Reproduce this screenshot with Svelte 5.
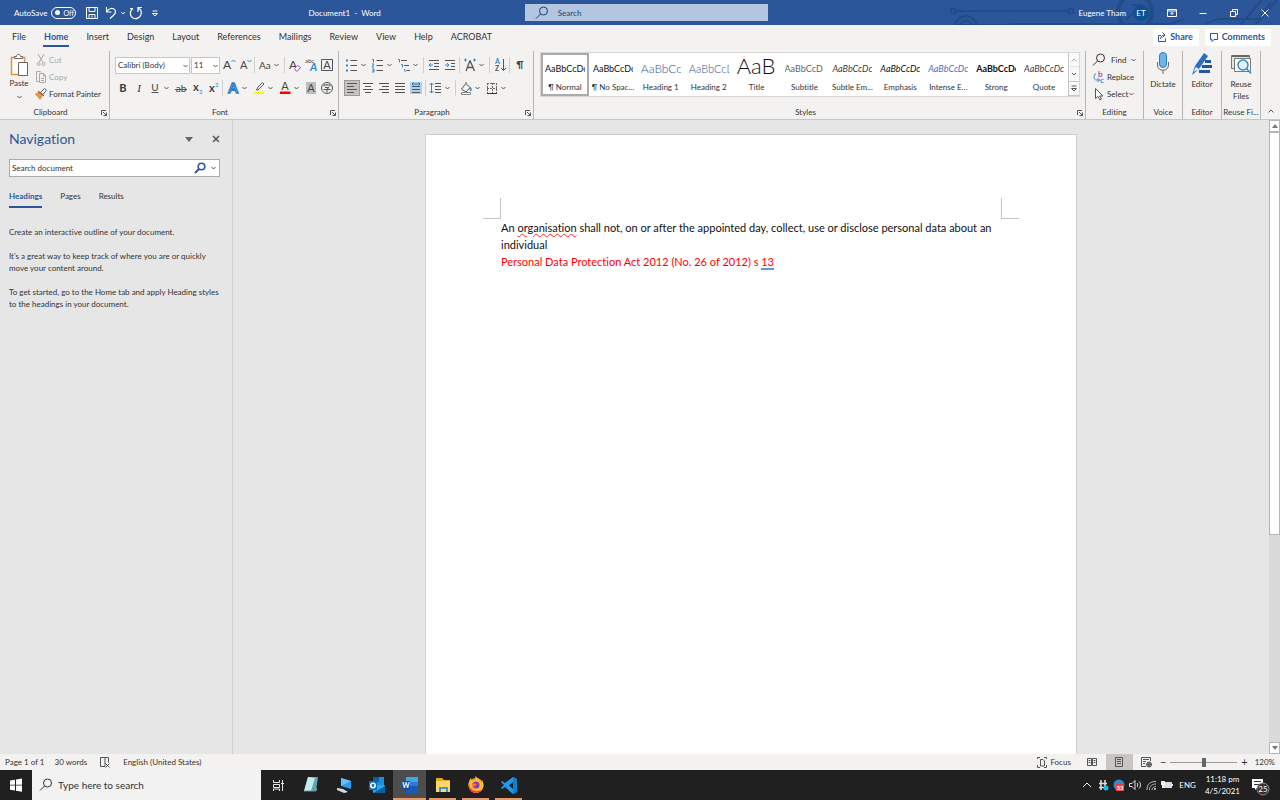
<script lang="ts">
  type Tool = { icon?: string; label: string; menu?: boolean; sep?: boolean; active?: boolean };

  const tabs = ['File', 'Home', 'Insert', 'Design', 'Layout', 'References', 'Mailings', 'Review', 'View', 'Help', 'ACROBAT'];
  let activeTab = $state('Home');

  const navTabs = ['Headings', 'Pages', 'Results'];
  let activeNav = $state('Headings');

  const sep: Tool = { label: '', sep: true };

  const fontTop: Tool[] = [
    { icon: 'grow', label: 'Increase Font Size' },
    { icon: 'shrink', label: 'Decrease Font Size' },
    sep,
    { icon: 'changeCase', label: 'Change Case', menu: true },
    sep,
    { icon: 'clearFormat', label: 'Clear All Formatting' },
    { icon: 'phonetic', label: 'Phonetic Guide' },
    { icon: 'charBorder', label: 'Character Border' }
  ];

  const fontBottom: Tool[] = [
    { icon: 'bold', label: 'Bold' },
    { icon: 'italic', label: 'Italic' },
    { icon: 'underline', label: 'Underline', menu: true },
    { icon: 'strike', label: 'Strikethrough' },
    { icon: 'subscript', label: 'Subscript' },
    { icon: 'superscript', label: 'Superscript' },
    sep,
    { icon: 'effects', label: 'Text Effects', menu: true },
    { icon: 'highlight', label: 'Text Highlight Color', menu: true },
    { icon: 'fontColor', label: 'Font Color', menu: true },
    { icon: 'charShade', label: 'Character Shading' },
    { icon: 'enclose', label: 'Enclose Characters' }
  ];

  const paraTop: Tool[] = [
    { icon: 'bullets', label: 'Bullets', menu: true },
    { icon: 'numbering', label: 'Numbering', menu: true },
    { icon: 'multilevel', label: 'Multilevel List', menu: true },
    sep,
    { icon: 'outdent', label: 'Decrease Indent' },
    { icon: 'indent', label: 'Increase Indent' },
    sep,
    { icon: 'asian', label: 'Asian Layout', menu: true },
    sep,
    { icon: 'sort', label: 'Sort' },
    sep,
    { icon: 'pilcrow', label: 'Show Paragraph Marks' }
  ];

  const paraBottom: Tool[] = [
    { icon: 'alignLeft', label: 'Align Left', active: true },
    { icon: 'alignCenter', label: 'Center' },
    { icon: 'alignRight', label: 'Align Right' },
    { icon: 'justify', label: 'Justify' },
    { icon: 'distribute', label: 'Distributed' },
    sep,
    { icon: 'spacing', label: 'Line Spacing', menu: true },
    sep,
    { icon: 'shading', label: 'Shading', menu: true },
    { icon: 'borders', label: 'Borders', menu: true }
  ];

  const styles = [
    { name: '¶ Normal', sample: 'AaBbCcDc', kind: 'normal' },
    { name: '¶ No Spac...', sample: 'AaBbCcDc', kind: 'normal' },
    { name: 'Heading 1', sample: 'AaBbCc', kind: 'heading1' },
    { name: 'Heading 2', sample: 'AaBbCcD', kind: 'heading2' },
    { name: 'Title', sample: 'AaB', kind: 'title' },
    { name: 'Subtitle', sample: 'AaBbCcD', kind: 'subtitle' },
    { name: 'Subtle Em...', sample: 'AaBbCcDc', kind: 'subtle' },
    { name: 'Emphasis', sample: 'AaBbCcDc', kind: 'emphasis' },
    { name: 'Intense E...', sample: 'AaBbCcDc', kind: 'intense' },
    { name: 'Strong', sample: 'AaBbCcDc', kind: 'strong' },
    { name: 'Quote', sample: 'AaBbCcDc', kind: 'quote' }
  ];
  let activeStyle = $state(0);
  let zoom = $state(120);

  const apps = [
    { icon: 'taskView', label: 'Task View' },
    { icon: 'notepad', label: 'Notepad' },
    { icon: 'remote', label: 'Remote Desktop' },
    { icon: 'outlook', label: 'Outlook' },
    { icon: 'word', label: 'Word', open: true, focused: true },
    { icon: 'explorer', label: 'File Explorer', open: true },
    { icon: 'firefox', label: 'Firefox', open: true },
    { icon: 'vscode', label: 'Visual Studio Code', open: true }
  ];

  const tray = ['slack', 'alert', 'volume', 'wifi', 'battery'];

  const g = 'stroke="#555" fill="none"';
  const b = 'stroke="#2e8bd0" fill="none"';

  // all drawn on a 16 x 16 grid
  const icons: Record<string, string> = {
    chevron: `<path d="M6 7l2 2 2-2" ${g}/>`,
    launcher: `<path d="M5.500 10V5.500H10M7 7l3.500 3.500M10.500 7.500v3h-3" ${g}/>`,
    save: `<path d="M2.500 2.500h11v11h-11zM5 2.500v4h6v-4M5 13.500v-4h6v4M8 10.500v2" stroke="#fff" fill="none"/>`,
    undo: `<path d="M3.500 2v5h5M4 6.500C6 3 10 2.500 12 5c1.500 2.500 0 4.500-5 8.500" stroke="#fff" stroke-width="1.200" fill="none"/>`,
    redo: `<path d="M5 3.500C1.500 5.500 1.500 11 5 13c3 1.500 7 0 8-3.500.8-3-.5-5.500-3-6.500M10 7V2.500h4M5 3.500H2" stroke="#fff" stroke-width="1.200" fill="none"/>`,
    customize: `<path d="M5.500 6h5" stroke="#fff"/><path d="M5.500 8.500l2.500 2.500 2.500-2.500z" stroke="#fff" fill="none"/>`,
    chevronWhite: `<path d="M6 7l2 2 2-2" stroke="#fff" fill="none"/>`,
    search: `<circle cx="9.500" cy="6" r="4" stroke="currentColor" fill="none"/><path d="M6.500 9L2 13.500" stroke="currentColor"/>`,
    searchBold: `<circle cx="9.500" cy="6.500" r="3.300" stroke="#2b579a" stroke-width="1.600" fill="none"/><path d="M7 9l-4 4" stroke="#2b579a" stroke-width="2"/>`,
    ribbonMode: `<path d="M3.500 4.500h9v7h-9zM3.500 6h9M8 10V7.500M6.500 9L8 7.500 9.500 9" stroke="#fff" fill="none"/>`,
    minimize: `<path d="M4.500 8.500h7" stroke="#fff"/>`,
    restore: `<path d="M4.500 6.500h5v5h-5zM6.500 6V4.500h5v5H10" stroke="#fff" fill="none"/>`,
    close: `<path d="M4.500 4.500l7 7M11.500 4.500l-7 7" stroke="#fff" fill="none"/>`,
    share: `<path d="M7 6.500H4.500v6h7v-3M6.500 10c.5-3 2-4 4-4M8.500 3.500L11 6l-2.500 2.500" stroke="#2b579a" fill="none"/>`,
    comment: `<path d="M4.500 4.500h7v6H8l-2 2v-2H4.500z" stroke="#2b579a" fill="none"/>`,
    cut: `<path d="M5 2l5 8.500M11 2L6 10.500" stroke="#aaa"/><circle cx="5.500" cy="12" r="1.500" stroke="#aaa" fill="none"/><circle cx="10.500" cy="12" r="1.500" stroke="#aaa" fill="none"/>`,
    copy: `<path d="M6 12.500H3.500v-10h4l1 1M6.500 4.500h4l2 2v7h-6zM10.500 4.500v2.500h2.500" stroke="#aaa" fill="none"/><path d="M8 9.500h3M8 11.500h3" stroke="#aaa"/>`,
    painter: `<path d="M2 8l4-2.500 4 4-3 4.500z" fill="#e8933f"/><path d="M5 5l6 5M7.500 6.500l4-4 2 1.500-3.500 4.500z" stroke="#555" fill="#fff"/>`,
    grow: `<text x="2" y="12" font-size="12" fill="#444">A</text><path d="M10.500 5L12.500 3l2 2" ${b}/>`,
    shrink: `<text x="3" y="12" font-size="11" fill="#444">A</text><path d="M10.500 3l2 2 2-2" ${b}/>`,
    changeCase: `<text x="2" y="12" font-size="10" fill="#444">Aa</text>`,
    clearFormat: `<text x="2" y="12" font-size="12" fill="#444">A</text><path d="M7.500 11.500l3-3 3 2-3 3.500h-1.500z" fill="#fff" stroke="#a64cb4"/>`,
    phonetic: `<text x="2" y="6" font-size="6" fill="#444">abc</text><text x="7" y="14" font-size="11" font-weight="700" font-style="italic" fill="#2e8bd0">A</text>`,
    charBorder: `<path d="M2.500 2.500h11v11h-11z" ${g}/><text x="8" y="12" font-size="11" text-anchor="middle" fill="#444">A</text>`,
    bold: `<text x="8" y="12" font-size="11" font-weight="900" text-anchor="middle" fill="#444">B</text>`,
    italic: `<text x="8" y="12" font-size="11" font-family="Liberation Serif" font-style="italic" text-anchor="middle" fill="#333">I</text>`,
    underline: `<text x="8" y="11" font-size="10" text-anchor="middle" fill="#444">U</text><path d="M4.500 12.500h7" ${g}/>`,
    strike: `<text x="8" y="12" font-size="10" text-anchor="middle" fill="#444">ab</text><path d="M2 9.500h12" ${g}/>`,
    subscript: `<text x="4" y="11" font-size="11" font-weight="700" fill="#444">x</text><text x="10" y="14" font-size="6" fill="#2e8bd0">2</text>`,
    superscript: `<text x="4" y="12" font-size="11" font-weight="700" fill="#444">x</text><text x="10" y="7" font-size="6" fill="#2e8bd0">2</text>`,
    effects: `<text x="8" y="13" font-size="14" font-weight="700" text-anchor="middle" fill="#fff" stroke="#2e7cc4" stroke-width="1.300">A</text>`,
    highlight: `<path d="M5.500 10l1.500-3 4.500-4.500 1.500 1.500-4.500 4.500-1.500 1.500z" stroke="#555" fill="#f3f2f1"/><path d="M3 11.500h10v2.500H3z" fill="#ffff00"/>`,
    fontColor: `<text x="8" y="10" font-size="11" text-anchor="middle" fill="#444">A</text><path d="M3 11.500h10.500v2.500H3z" fill="#f00"/>`,
    charShade: `<path d="M3 2h10v12H3z" fill="#bdbdbd"/><text x="8" y="12" font-size="11" text-anchor="middle" fill="#444">A</text>`,
    enclose: `<circle cx="8" cy="8" r="5.500" ${g}/><path d="M5 6.500V5h6v1.500M6 7.500h4L8 9v3.500M4.500 9.500h7M8 4v1" ${g}/>`,
    bullets: `<path d="M6.500 3.500H13M6.500 8.500H13M6.500 13.500H13" ${g}/><path d="M2 2.500h2v2H2zM2 7.500h2v2H2zM2 12.500h2v2H2z" fill="#2e8bd0"/>`,
    numbering: `<path d="M6.500 3.500H13M6.500 8.500H13M6.500 13.500H13" ${g}/><path d="M2 2.500h1.500v3M2 7h2l-2 3h2M2 12h2v3H2M2.500 13.500H4" ${b}/>`,
    multilevel: `<path d="M5 3.500h6M8 8.500h5M10.500 13.500H14" ${g}/><path d="M2 2.500h1.500v3M5 7.500h1.500v3M8 12.500h1v2.500" ${b}/>`,
    outdent: `<path d="M3 3.500h10M8 6.500h5M8 9.500h5M3 12.500h10" ${g}/><path d="M7 8H3M5 6L3 8l2 2" ${b}/>`,
    indent: `<path d="M3 3.500h10M9 6.500h4M9 9.500h4M3 12.500h10" ${g}/><path d="M3 8h4M5 6l2 2-2 2" ${b}/>`,
    asian: `<path d="M8 3.500L4 14M8 3.500L12.500 14M5 10.500h6" stroke="#555" stroke-width="1.300" fill="none"/><path d="M2 3h3M3.500 1.500v3M11 3h3M12.500 1.500v3" ${b}/>`,
    sort: `<text x="3" y="7" font-size="7" font-weight="700" fill="#2e8bd0">A</text><text x="3" y="14" font-size="7" font-weight="700" fill="#555">Z</text><path d="M11.500 2v11.500M9 11l2.500 2.500L14 11" ${g}/>`,
    pilcrow: `<text x="8" y="11" font-size="10" font-weight="700" text-anchor="middle" fill="#444">¶</text>`,
    alignLeft: `<path d="M3 3.500h10M3 6.500h7M3 9.500h10M3 12.500h7" ${g}/>`,
    alignCenter: `<path d="M3 3.500h10M5 6.500h6M3 9.500h10M5 12.500h6" ${g}/>`,
    alignRight: `<path d="M3 3.500h10M6 6.500h7M3 9.500h10M6 12.500h7" ${g}/>`,
    justify: `<path d="M3 3.500h10M3 6.500h10M3 9.500h10M3 12.500h10" ${g}/>`,
    distribute: `<path d="M2 2h12v12H2z" fill="#a9d3f0"/><path d="M4 6.500h8M4 9.500h8M4 12.500h8" ${g}/><path d="M4 4h8M5.500 2.500L4 4l1.500 1.500M10.500 2.500L12 4l-1.500 1.500" stroke="#1f78bf" fill="none"/>`,
    spacing: `<path d="M7 3.500h6M7 6.500h6M7 9.500h6M7 12.500h6" ${g}/><path d="M3.500 3v10M1.500 5l2-2 2 2M1.500 11l2 2 2-2" ${b}/>`,
    shading: `<path d="M3.500 9L8 3.500l4 4-4 4.500zM8 3.500V2" ${g}/><path d="M12 6.500c1.500 1.500 2.500 3 1 5-1.500-1-2-3-1-5z" fill="#2e8bd0"/><path d="M3.500 12.500h9v2h-9z" stroke="#888" fill="#fff"/>`,
    borders: `<path d="M3 3.500h10M3.500 3v10M12.500 3v10M8.500 3v10M3 8.500h10" stroke="#666" stroke-dasharray="2 1"/><path d="M3 13.500h10" stroke="#333"/>`,
    replace: `<text x="7" y="8" font-size="8" font-weight="700" fill="#a64cb4">b</text><text x="9" y="14" font-size="8" font-weight="700" fill="#2e8bd0">c</text><path d="M5 4.500C2.500 6 2.500 9.500 4.500 11h4M6.500 9l2 2-2 2" ${b}/>`,
    select: `<path d="M4.500 2.500v10L7 10.500l2 3.500 1.500-1-2-3h3.500z" stroke="#555" fill="#fff"/>`,
    chevronUp: `<path d="M5.500 9.500L8 7l2.500 2.500" ${g}/>`,
    moreStyles: `<path d="M5.500 6h5" ${g}/><path d="M5.500 8.500l2.500 2.500 2.500-2.500z" ${g}/>`,
    focus: `<path d="M6.500 5.500h2.500l1.500 1.500v5h-4zM3.500 5V3.500H6M10 3.500h2.500V5M3.500 11v2.500H6M10 13.500h2.500V11" ${g}/>`,
    proof: `<path d="M8 12.500H3.500v-9H8zM8 3.500h3.500v5M8.500 9.500l4 4M12.500 9.500l-4 4" ${g}/>`,
    readMode: `<path d="M3.500 4.500h4v7h-4zM8.500 4.500h4v7h-4zM4.500 6.500h2M4.500 8.500h2M9.500 6.500h2M9.500 8.500h2" ${g}/>`,
    printLayout: `<path d="M4.500 3.500h7v9h-7zM6 5.500h4M6 7.500h4M6 9.500h4" ${g}/>`,
    webLayout: `<path d="M8 12.500H3.500v-9h9V7M5 5.500h6M5 7.500h3M5 9.500h2" ${g}/><circle cx="11" cy="10.500" r="2.500" stroke="#555" fill="#999"/><path d="M8.500 10.500h5M11 8v5" ${g}/>`
  };

  // taskbar pictures, on a 24 x 24 grid
  const appIcons: Record<string, string> = {
    windows: `<path d="M6 7.500l5-.8v5H6zM12 6.500l6-1v6.200h-6zM6 12.600h5v5l-5-.8zM12 12.600h6v6.200l-6-1z" fill="#fff"/>`,
    taskView: `<path d="M7.500 7v2.500h6V7M7.500 11.500h6v3h-6zM7.500 18v-2h6v2M16.500 7v11M15 10.500h3" stroke="#e8e8e8" fill="none"/>`,
    notepad: `<path d="M9 4h10l-2 14H5z" fill="#58a9b4"/><path d="M9 4l7 1-4 13H5z" fill="#c5eaee"/><path d="M5 18h12l1-3" stroke="#7d8a8c" fill="none"/>`,
    remote: `<path d="M9 5l10 3v8L9 13z" fill="#2f9bee"/><path d="M9 5l10 3-10 5z" fill="#65c0ff"/><path d="M5 15l6 1 5 3-4 1-7-3z" fill="#d5dadd"/>`,
    outlook: `<path d="M8 4h11v9H8z" fill="#1490df"/><path d="M8 4h6v5H8z" fill="#0f5fa8"/><path d="M8 12h12v8H8z" fill="#28a8ea"/><path d="M8 20l12-7v7z" fill="#0a5ea8"/><path d="M4 8h8v9H4z" fill="#0f6cbd"/><circle cx="8" cy="12.500" r="2.200" stroke="#fff" stroke-width="1.500" fill="none"/>`,
    word: `<path d="M8 4h12v16H8z" fill="#185abd"/><path d="M8 4h12v5H8z" fill="#41a5ee"/><path d="M8 9h12v4H8z" fill="#2b7cd3"/><path d="M4 8h8v9H4z" fill="#184fa3"/><text x="8" y="15" font-size="7" font-weight="700" text-anchor="middle" fill="#fff">W</text>`,
    explorer: `<path d="M5 5h6l2 2h6v3H5z" fill="#e9a820"/><path d="M5 8h14v11H5z" fill="#ffd767"/><path d="M8 19v-5h9v5h-2v-3h-5v3z" fill="#3c97d8"/>`,
    firefox: `<circle cx="12" cy="12.500" r="7.500" fill="#ff9029"/><path d="M4.500 11C5 8 6 6 7 5l1 3 4-1-1-4c3 2 5 4 6 7l1-3c2 4 2 8-1 11-4 3-10 2-12-3z" fill="#ffbd2e"/><path d="M5 10c0 7 6 10 13 7-3 4-11 4-13-2z" fill="#f72d5f"/><circle cx="12" cy="12" r="3.500" fill="#7b3fd0"/><path d="M8 10c2 0 3 1 5 1-1 2-3 1-3 4-2-1-3-3-2-5z" fill="#ff7a22"/>`,
    vscode: `<path d="M16 4l4 2v13l-4 2-8-7-3 2-1-1 3-3-3-3 1-1 3 2zM16 9l-4 3.500 4 3.500z" fill="#1f9cf0" fill-rule="evenodd"/><path d="M16 4l4 2v13l-4 2z" fill="#0f7fd0"/>`,
    up: `<path d="M8 14l4-4 4 4" stroke="#fff" fill="none"/>`,
    slack: `<path d="M10 7v10M14 7v10M8 10.500h8M8 14.500h8" stroke="#ddd" stroke-width="1.600"/><circle cx="15" cy="15" r="2.500" fill="#18b8e8"/>`,
    alert: `<circle cx="12" cy="12" r="5.500" fill="#2e8bd0"/><path d="M9 11h8v7H9z" fill="#e8403a"/><text x="13" y="17" font-size="6" font-weight="700" text-anchor="middle" fill="#fff">33</text>`,
    volume: `<path d="M6.500 10.500H9l3-3v9l-3-3H6.500zM14 10c1 1 1 3 0 4M16 8.500c2 2 2 5 0 7" stroke="#ddd" fill="none"/>`,
    wifi: `<path d="M8 17C8 11 11 8.500 17 8.500M10.500 17c0-4 2.500-6 6.500-6M13 17c0-2 2-3.500 4-3.500" stroke="#bbb" fill="none"/><circle cx="16" cy="16" r="1" fill="#ddd"/>`,
    battery: `<path d="M8.500 9.500h8v5h-8z" stroke="#ddd" fill="#ddd"/><path d="M17 11h1v2h-1zM6 8h4v4H9v3H7v-3H6z" fill="#eee"/>`,
    notify: `<path d="M4 6h11v9H9l-2 2v-2H4z" fill="#fff"/><path d="M6 8.500h7M6 11.500h7" stroke="#333"/><circle cx="15" cy="16" r="6" fill="#333" stroke="#888"/><text x="15" y="19" font-size="8" text-anchor="middle" fill="#fff">25</text>`
  };
</script>

{#snippet icon(name: string)}
  <svg class="icon" width="16" height="16" viewBox="0 0 16 16" aria-hidden="true">{@html icons[name]}</svg>
{/snippet}

{#snippet appIcon(name: string)}
  <svg class="icon" width="24" height="24" viewBox="0 0 24 24" aria-hidden="true">{@html appIcons[name]}</svg>
{/snippet}

{#snippet chev()}
  <svg class="icon" width="7" height="16" viewBox="0 0 7 16" aria-hidden="true">
    <path d="M1.500 7l2 2 2-2" stroke="#555" fill="none" />
  </svg>
{/snippet}

{#snippet toolRow(tools: Tool[])}
  {#each tools as tool}
    {#if tool.sep}
      <span class="tool-sep"></span>
    {:else}
      <button class="tool" class:has-menu={tool.menu} class:active={tool.active} aria-label={tool.label}>
        {@render icon(tool.icon!)}
        {#if tool.menu}
          {@render chev()}
        {/if}
      </button>
    {/if}
  {/each}
{/snippet}

{#snippet groupLabel(name: string, launcher: boolean)}
  <div class="group-label">
    <span>{name}</span>
    {#if launcher}
      <button class="launcher" aria-label="{name} settings">{@render icon('launcher')}</button>
    {/if}
  </div>
{/snippet}

<div class="desktop">
  <header class="title-bar">
    <div class="title-left">
      <div class="quick-access">
        <span>AutoSave</span>
        <button class="autosave" aria-label="AutoSave off"><i></i>Off</button>
        <button class="qat" aria-label="Save">{@render icon('save')}</button>
        <button class="qat" aria-label="Undo">{@render icon('undo')}</button>
        <button class="qat narrow" aria-label="Undo list">{@render icon('chevronWhite')}</button>
        <button class="qat" aria-label="Redo">{@render icon('redo')}</button>
        <button class="qat" aria-label="Customize">{@render icon('customize')}</button>
      </div>
      <span class="doc-title">Document1 &nbsp;-&nbsp; Word</span>
    </div>
    <label class="title-search">
      {@render icon('search')}
      <input type="text" placeholder="Search" aria-label="Search" />
    </label>
    <div class="title-right">
      <svg class="circuit" width="330" height="25" viewBox="0 0 330 25" aria-hidden="true">
        <g stroke="#234b87" stroke-width="2" fill="none">
          <circle cx="3" cy="11" r="2.500" />
          <path d="M6 11h112M7 25h50l3-1h160l14-5" />
          <circle cx="121" cy="11" r="2.500" />
          <circle cx="16" cy="27" r="11" />
          <circle cx="16" cy="27" r="6" />
          <circle cx="185" cy="12" r="17" stroke-width="4" />
          <path d="M176 20l14-14M182 5h9v9M255 24l14-5h40l12-17M290 25l22-25M305 25l22-25" />
        </g>
      </svg>
      <span class="user">Eugene Tham</span>
      <span class="avatar">ET</span>
      <button class="win" aria-label="Ribbon Display Options">{@render icon('ribbonMode')}</button>
      <button class="win" aria-label="Minimize">{@render icon('minimize')}</button>
      <button class="win" aria-label="Restore">{@render icon('restore')}</button>
      <button class="win" aria-label="Close">{@render icon('close')}</button>
    </div>
  </header>

  <nav class="tabs">
    {#each tabs as tab}
      <button class="tab" class:active={tab === activeTab} onclick={() => (activeTab = tab)}>{tab}</button>
    {/each}
    <div class="tab-actions">
      <button class="action">{@render icon('share')}Share</button>
      <button class="action">{@render icon('comment')}Comments</button>
    </div>
  </nav>

  <section class="ribbon">
    <div class="group clipboard">
      <div class="group-body clipboard-body">
        <button class="paste">
          <svg width="20" height="24" viewBox="0 0 20 24" aria-hidden="true">
            <path d="M2.500 4.500h13v17h-13z" fill="#fff" stroke="#e8932f" stroke-width="1.500" />
            <path d="M5.500 5.500v-2h2c0-3 4-3 4 0h2v2z" fill="#fff" stroke="#666" />
            <path d="M9.500 9.500h9v13h-9z" fill="#fff" stroke="#666" />
          </svg>
          <span>Paste</span>
          {@render chev()}
        </button>
        <div class="stack">
          <button class="row-btn disabled">{@render icon('cut')}Cut</button>
          <button class="row-btn disabled">{@render icon('copy')}Copy</button>
          <button class="row-btn">{@render icon('painter')}Format Painter</button>
        </div>
      </div>
      {@render groupLabel('Clipboard', true)}
    </div>

    <div class="group font">
      <div class="group-body rows">
        <div class="tool-row">
          <span class="combo family">
            <select aria-label="Font"><option>Calibri (Body)</option></select>
            {@render chev()}
          </span>
          <span class="combo size">
            <select aria-label="Font Size"><option>11</option></select>
            {@render chev()}
          </span>
          {@render toolRow(fontTop)}
        </div>
        <div class="tool-row">{@render toolRow(fontBottom)}</div>
      </div>
      {@render groupLabel('Font', true)}
    </div>

    <div class="group paragraph">
      <div class="group-body rows">
        <div class="tool-row">{@render toolRow(paraTop)}</div>
        <div class="tool-row">{@render toolRow(paraBottom)}</div>
      </div>
      {@render groupLabel('Paragraph', true)}
    </div>

    <div class="group styles">
      <div class="group-body gallery">
        {#each styles as style, i}
          <button class="style" class:active={i === activeStyle} onclick={() => (activeStyle = i)}>
            <span class="sample {style.kind}">{style.sample}</span>
            <span class="style-name">{style.name}</span>
          </button>
        {/each}
        <div class="gallery-scroll">
          <button class="off" aria-label="Row up">{@render icon('chevronUp')}</button>
          <button aria-label="Row down">{@render icon('chevron')}</button>
          <button aria-label="More styles">{@render icon('moreStyles')}</button>
        </div>
      </div>
      {@render groupLabel('Styles', true)}
    </div>

    <div class="group editing">
      <div class="group-body stack">
        <button class="row-btn spread">{@render icon('search')}Find{@render chev()}</button>
        <button class="row-btn">{@render icon('replace')}Replace</button>
        <button class="row-btn">{@render icon('select')}Select{@render chev()}</button>
      </div>
      {@render groupLabel('Editing', false)}
    </div>

    <div class="group single">
      <button class="group-body big">
        <svg width="24" height="26" viewBox="0 0 24 26" aria-hidden="true">
          <rect x="8.500" y="1.500" width="7" height="15" rx="3.500" fill="#6fb4e8" stroke="#2e7cc4" />
          <path d="M6.500 11v3c0 7 11 7 11 0v-3M12 19.500V23" stroke="#666" fill="none" />
        </svg>
        <span>Dictate</span>
      </button>
      {@render groupLabel('Voice', false)}
    </div>

    <div class="group single">
      <button class="group-body big">
        <svg width="24" height="26" viewBox="0 0 24 26" aria-hidden="true">
          <path d="M2 24L5 15 14 2l4 3-9 13z" fill="#2b6cc4" />
          <path d="M3.500 21l2.500-5 3 2z" fill="#fff" />
          <path d="M15 10.500h6M12 15.500h10M9 20.500h11" stroke="#2456a6" stroke-width="3" />
        </svg>
        <span>Editor</span>
      </button>
      {@render groupLabel('Editor', false)}
    </div>

    <div class="group single">
      <button class="group-body big">
        <svg width="24" height="26" viewBox="0 0 24 26" aria-hidden="true">
          <path d="M2.500 4.500h18v13h-18z" fill="#e4e4e4" stroke="#777" />
          <path d="M5.500 7.500h16v13h-16z" fill="#fff" stroke="#777" />
          <path d="M3 5h17" stroke="#666" stroke-width="2" />
          <circle cx="14" cy="14" r="5" fill="#e6f3fc" stroke="#2e8bd0" stroke-width="1.500" />
          <path d="M17.500 17.500l4.500 5" stroke="#2e8bd0" stroke-width="1.500" />
        </svg>
        <span>Reuse<br />Files</span>
      </button>
      {@render groupLabel('Reuse Fi...', false)}
    </div>

    <button class="collapse" aria-label="Collapse the Ribbon">{@render icon('chevronUp')}</button>
  </section>

  <main class="workspace">
    <aside class="nav-pane">
      <div class="nav-head">
        <h1>Navigation</h1>
        <button aria-label="Task Pane Options">
          <svg width="8" height="5" viewBox="0 0 8 5"><path d="M0 0h8L4 5z" fill="#666" /></svg>
        </button>
        <button aria-label="Close pane">
          <svg width="8" height="8" viewBox="0 0 8 8"><path d="M1 1l6 6M7 1L1 7" stroke="#555" stroke-width="1.500" /></svg>
        </button>
      </div>
      <label class="nav-search">
        <input type="text" placeholder="Search document" aria-label="Search document" />
        {@render icon('searchBold')}
        {@render chev()}
      </label>
      <div class="nav-tabs">
        {#each navTabs as tab}
          <button class:active={tab === activeNav} onclick={() => (activeNav = tab)}>{tab}</button>
        {/each}
      </div>
      <p>Create an interactive outline of your document.</p>
      <p>It's a great way to keep track of where you are or quickly move your content around.</p>
      <p>To get started, go to the Home tab and apply Heading styles to the headings in your document.</p>
    </aside>

    <div class="canvas">
      <article class="page">
        <span class="crop left"></span>
        <span class="crop right"></span>
        <p>An <span class="misspelt">organisation</span> shall not, on or after the appointed day, collect, use or disclose personal data about an individual</p>
        <p class="citation">Personal Data Protection Act 2012 (No. 26 of 2012) s <span class="grammar">13</span></p>
      </article>
    </div>

    <div class="scrollbar">
      <button aria-label="Scroll up"><svg width="6" height="4" viewBox="0 0 6 4"><path d="M0 4h6L3 0z" fill="#777" /></svg></button>
      <div class="track"><div class="thumb"></div></div>
      <button aria-label="Scroll down"><svg width="6" height="4" viewBox="0 0 6 4"><path d="M0 0h6L3 4z" fill="#777" /></svg></button>
    </div>
  </main>

  <footer class="status-bar">
    <span>Page 1 of 1</span>
    <span>30 words</span>
    <button aria-label="Proofing errors">{@render icon('proof')}</button>
    <span>English (United States)</span>
    <div class="status-right">
      <button class="focus">{@render icon('focus')}Focus</button>
      <button class="view" aria-label="Read Mode">{@render icon('readMode')}</button>
      <button class="view active" aria-label="Print Layout">{@render icon('printLayout')}</button>
      <button class="view" aria-label="Web Layout">{@render icon('webLayout')}</button>
      <div class="zoom">
        <button aria-label="Zoom out" onclick={() => (zoom -= 10)}>−</button>
        <input type="range" min="10" max="230" bind:value={zoom} aria-label="Zoom" />
        <button aria-label="Zoom in" onclick={() => (zoom += 10)}>+</button>
      </div>
      <span class="zoom-value">{zoom}%</span>
    </div>
  </footer>

  <div class="taskbar">
    <button class="start" aria-label="Start">{@render appIcon('windows')}</button>
    <label class="task-search">
      {@render icon('search')}
      <input type="text" placeholder="Type here to search" aria-label="Type here to search" />
    </label>
    {#each apps as app}
      <button class="app" class:open={app.open} class:focused={app.focused} aria-label={app.label}>
        {@render appIcon(app.icon)}
      </button>
    {/each}
    <div class="tray">
      <button class="tray-btn" aria-label="Show hidden icons">{@render appIcon('up')}</button>
      {#each tray as name}
        <button class="tray-btn" aria-label={name}>{@render appIcon(name)}</button>
      {/each}
      <span class="lang">ENG</span>
      <div class="clock"><span>11:18 pm</span><span>4/5/2021</span></div>
      <button class="notify" aria-label="Notifications">{@render appIcon('notify')}</button>
    </div>
  </div>
</div>

<style>
  :global(body) {
    background: #e6e6e6;
  }

  .desktop {
    display: flex;
    flex-direction: column;
    min-height: 100vh;
    font-family: Lato, sans-serif;
    font-size: 8px;
    font-variant-ligatures: none;
    line-height: 12px;
    color: #333;
  }

  .desktop * {
    box-sizing: border-box;
  }

  button {
    display: flex;
    align-items: center;
    padding: 0;
    border: 0;
    background: none;
    font: inherit;
    color: inherit;
    white-space: nowrap;
  }

  input,
  select {
    min-width: 0;
    padding: 0;
    border: 0;
    outline: 0;
    background: none;
    font: inherit;
    color: inherit;
  }

  input::placeholder {
    color: inherit;
    opacity: 1;
  }

  p,
  h1 {
    margin: 0;
  }

  .icon {
    flex: none;
    display: block;
  }

  /* Title bar */
  .title-bar {
    display: grid;
    grid-template-columns: 41% 19% 1fr;
    align-items: center;
    height: 25px;
    background: #2b579a;
    color: #fff;
  }

  .title-left,
  .quick-access {
    display: flex;
    align-items: center;
  }

  .quick-access {
    padding-left: 14px;
  }

  .autosave {
    width: 25px;
    height: 12px;
    margin: 0 6px 0 4px;
    padding-left: 3px;
    gap: 3px;
    border: 1px solid #fff;
    border-radius: 6px;
    font-size: 7px;
  }

  .autosave i {
    width: 5px;
    height: 5px;
    border-radius: 50%;
    background: #fff;
  }

  .qat {
    justify-content: center;
    width: 19px;
  }

  .qat.narrow {
    width: 6px;
  }

  .doc-title {
    flex: 1;
    text-align: center;
  }

  .title-search {
    display: flex;
    align-items: center;
    gap: 8px;
    height: 17px;
    padding-left: 9px;
    background: #b4c5df;
    color: #1f3f73;
  }

  .title-right {
    position: relative;
    display: flex;
    align-items: center;
    justify-content: flex-end;
    height: 25px;
    overflow: hidden;
  }

  .circuit {
    position: absolute;
    right: 0;
    top: 0;
  }

  .user,
  .avatar,
  .win {
    position: relative;
  }

  .avatar {
    width: 16px;
    margin: 0 7px;
    border-radius: 50%;
    background: #0a5291;
    line-height: 16px;
    text-align: center;
  }

  .win {
    justify-content: center;
    width: 31px;
  }

  /* Tabs */
  .tabs {
    display: flex;
    align-items: center;
    height: 24px;
    padding-left: 3px;
    background: #f3f2f1;
    font-size: 9px;
  }

  .tab {
    position: relative;
    height: 24px;
    padding: 0 9px;
  }

  .tab.active {
    color: #2b579a;
    font-weight: 700;
  }

  .tab.active::after {
    content: '';
    position: absolute;
    inset: auto 8px 2px;
    height: 2px;
    background: #2b579a;
  }

  .tab-actions {
    display: flex;
    gap: 6px;
    margin-left: auto;
    padding-right: 9px;
  }

  .action {
    height: 17px;
    padding: 0 6px 0 1px;
    border-radius: 2px;
    background: #fff;
    color: #2b579a;
    font-weight: 700;
  }

  /* Ribbon */
  .ribbon {
    display: flex;
    height: 71px;
    padding-top: 2px;
    border-bottom: 1px solid #c8c6c4;
    background: #f3f2f1;
  }

  .group {
    display: flex;
    flex-direction: column;
    flex: none;
    border-right: 1px solid #b8b6b4;
  }

  .group-body {
    height: 54px;
  }

  .group-label {
    position: relative;
    height: 14px;
    line-height: 14px;
    padding-right: 8px;
    text-align: center;
    white-space: nowrap;
  }

  .single .group-label,
  .editing .group-label {
    padding: 0;
  }

  .launcher {
    position: absolute;
    right: -3px;
    top: 0;
  }

  .clipboard {
    width: 110px;
  }

  .font {
    width: 229px;
  }

  .paragraph {
    width: 195px;
  }

  .styles {
    flex: 1;
    min-width: 0;
  }

  .editing {
    width: 58px;
  }

  .single {
    width: 39px;
  }

  .clipboard-body {
    display: flex;
  }

  .paste {
    flex: none;
    flex-direction: column;
    width: 38px;
    padding-top: 2px;
  }

  .stack {
    display: flex;
    flex-direction: column;
  }

  .row-btn {
    height: 17px;
  }

  .row-btn.spread {
    gap: 4px;
  }

  .clipboard .stack {
    margin-left: -5px;
  }

  .row-btn.disabled {
    color: #a6a6a6;
  }

  .rows {
    display: flex;
    flex-direction: column;
    gap: 5px;
    padding: 5px 0 0 5px;
  }

  .tool-row {
    display: flex;
    align-items: center;
    height: 18px;
  }

  .tool.has-menu {
    margin-right: 3px;
  }

  .tool.active {
    background: #c5c3c1;
    outline: 1px solid #999;
    outline-offset: -1px;
  }

  .tool-sep {
    width: 1px;
    height: 16px;
    margin: 0 2px 0 1px;
    background: #d2d0ce;
  }

  .combo {
    position: relative;
    display: flex;
    height: 17px;
    margin-right: 1px;
    border: 1px solid #c8c6c4;
    background: #fff;
  }

  .combo select {
    width: 100%;
    padding-left: 2px;
    appearance: none;
  }

  .combo .icon {
    position: absolute;
    right: 0;
    top: 0;
    pointer-events: none;
  }

  .family {
    width: 75px;
  }

  .size {
    width: 29px;
  }

  .gallery {
    display: flex;
    height: 45px;
    margin: 1px 5px 8px 6px;
    border: 1px solid #d8d6d4;
    background: #fff;
  }

  .style {
    flex: 1;
    flex-direction: column;
    min-width: 0;
    padding: 0 2px;
    border: 2px solid transparent;
  }

  .style.active {
    border-color: #ababab;
  }

  .sample {
    width: 100%;
    height: 26px;
    overflow: hidden;
    font-size: 9px;
    line-height: 28px;
    text-align: left;
    color: #111;
  }

  .style-name {
    line-height: 12px;
  }

  .heading1,
  .heading2 {
    font-size: 12px;
    font-weight: 300;
    color: #2f5597;
  }

  .heading2 {
    font-size: 11px;
  }

  .title {
    font-size: 22px;
    font-weight: 300;
    line-height: 22px;
  }

  .subtitle {
    color: #666;
  }

  .subtle,
  .quote {
    font-style: italic;
    color: #404040;
  }

  .emphasis {
    font-style: italic;
  }

  .intense {
    font-style: italic;
    color: #4472c4;
  }

  .strong {
    font-weight: 700;
  }

  .gallery-scroll {
    display: flex;
    flex-direction: column;
    width: 11px;
    border-left: 1px solid #c8c6c4;
  }

  .gallery-scroll button {
    flex: 1;
    justify-content: center;
    overflow: hidden;
    border-bottom: 1px solid #c8c6c4;
    background: #f8f8f8;
  }

  .gallery-scroll .off {
    opacity: 0.5;
  }

  .editing .stack {
    padding-left: 5px;
  }

  .big {
    flex-direction: column;
    width: 100%;
  }

  .big svg {
    margin-bottom: 1px;
  }

  .collapse {
    align-items: flex-end;
    width: 19px;
    justify-content: center;
  }

  /* Workspace */
  .workspace {
    display: flex;
    flex: 1;
    background: #e6e6e6;
  }

  .nav-pane {
    width: 233px;
    padding: 9px 12px 0 9px;
    border-right: 1px solid #d0d0d0;
  }

  .nav-head {
    display: flex;
    align-items: center;
    gap: 19px;
    height: 20px;
  }

  .nav-head h1 {
    flex: 1;
    font-size: 14px;
    font-weight: 400;
    color: #2b579a;
  }

  .nav-search {
    display: flex;
    align-items: center;
    gap: 2px;
    height: 18px;
    margin: 10px 0 9px;
    padding: 0 2px;
    border: 1px solid #ababab;
    background: #fff;
  }

  .nav-search input {
    flex: 1;
  }

  .nav-tabs {
    display: flex;
    gap: 18px;
    margin-bottom: 18px;
  }

  .nav-tabs button {
    height: 22px;
    border-bottom: 2px solid transparent;
  }

  .nav-tabs .active {
    border-color: #2b579a;
    color: #2b579a;
    font-weight: 700;
  }

  .nav-pane p {
    margin-bottom: 12px;
  }

  .canvas {
    flex: 1;
    display: flex;
    justify-content: center;
    padding-top: 14px;
  }

  .page {
    position: relative;
    width: 652px;
    padding: 84px 75px 0;
    border: 1px solid #cfcfcf;
    border-bottom: 0;
    background: #fff;
    color: #111;
    font-size: 11px;
    line-height: 17px;
  }

  .crop {
    position: absolute;
    top: 63px;
    width: 18px;
    height: 21px;
    border-bottom: 1px solid #c4c4c4;
  }

  .crop.left {
    left: 57px;
    border-right: 1px solid #c4c4c4;
  }

  .crop.right {
    right: 57px;
    border-left: 1px solid #c4c4c4;
  }

  .misspelt {
    text-decoration: underline wavy #f22 1px;
  }

  .citation {
    color: #f00;
  }

  .grammar {
    border-bottom: 2px solid #6f8fe0;
  }

  .scrollbar {
    display: flex;
    flex-direction: column;
    width: 11px;
    background: #dadada;
  }

  .scrollbar button {
    justify-content: center;
    height: 12px;
    border: 1px solid #b5b5b5;
    background: #fff;
  }

  .track {
    flex: 1;
  }

  .thumb {
    height: 66%;
    border: 1px solid #b5b5b5;
    background: #fff;
  }

  /* Status bar */
  .status-bar {
    display: flex;
    align-items: center;
    gap: 10px;
    height: 16px;
    padding: 0 5px;
    background: #f3f2f1;
  }

  .status-right {
    display: flex;
    align-items: center;
    margin-left: auto;
  }

  .focus {
    margin-right: 8px;
  }

  .view {
    justify-content: center;
    width: 27px;
    height: 16px;
  }

  .view.active {
    background: #c8c6c4;
  }

  .zoom {
    display: flex;
    align-items: center;
    gap: 4px;
    font-size: 11px;
  }

  .zoom input {
    width: 67px;
    height: 10px;
    margin: 0;
    appearance: none;
    background: linear-gradient(#999, #999) center / 100% 1px no-repeat;
  }

  .zoom input::-webkit-slider-thumb {
    appearance: none;
    width: 4px;
    height: 9px;
    background: #666;
  }

  .zoom-value {
    margin-left: 7px;
  }

  /* Taskbar */
  .taskbar {
    display: flex;
    height: 30px;
    background: #202020;
    color: #fff;
  }

  .start {
    justify-content: center;
    width: 32px;
  }

  .task-search {
    display: flex;
    align-items: center;
    gap: 4px;
    width: 229px;
    padding-left: 6px;
    background: #f2f2f2;
    color: #333;
    font-size: 10px;
  }

  .app {
    position: relative;
    justify-content: center;
    width: 33px;
  }

  .app.open::after {
    content: '';
    position: absolute;
    inset: auto 3px 0;
    height: 2px;
    background: #e59a6a;
  }

  .app.focused::after {
    inset: auto 0 0;
  }

  .app.focused {
    background: #4d4d4d;
  }

  .tray {
    display: flex;
    align-items: center;
    margin-left: auto;
    padding-right: 8px;
  }

  .tray-btn {
    justify-content: center;
    width: 16px;
  }

  .lang {
    margin: 0 9px 0 4px;
  }

  .clock {
    display: flex;
    flex-direction: column;
    align-items: center;
    margin-right: 8px;
  }
</style>
